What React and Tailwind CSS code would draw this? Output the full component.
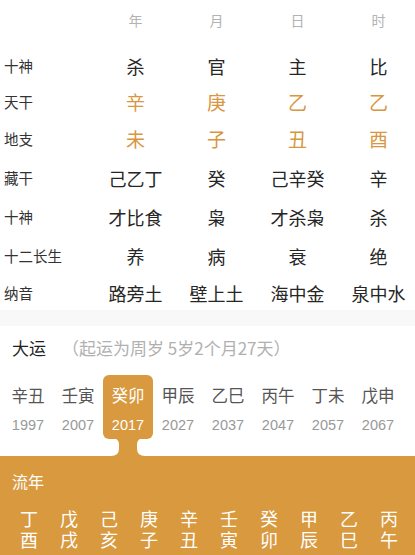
import React from 'react';

const font = { fontFamily: '"Noto Sans CJK SC", "Noto Sans", sans-serif' };
const numFont = { fontFamily: '"Liberation Sans", Arial, sans-serif' };

const rows = [
  { label: '十神', h: 'h-[36px]', vals: ['杀', '官', '主', '比'], orange: false },
  { label: '天干', h: 'h-[36px]', vals: ['辛', '庚', '乙', '乙'], orange: true },
  { label: '地支', h: 'h-[38px]', vals: ['未', '子', '丑', '酉'], orange: true },
  { label: '藏干', h: 'h-[40px]', vals: ['己乙丁', '癸', '己辛癸', '辛'], orange: false },
  { label: '十神', h: 'h-[38px]', vals: ['才比食', '枭', '才杀枭', '杀'], orange: false },
  { label: '十二长生', h: 'h-[40px]', vals: ['养', '病', '衰', '绝'], orange: false },
  { label: '纳音', h: 'h-[34px]', vals: ['路旁土', '壁上土', '海中金', '泉中水'], orange: false },
];

const dayun = [
  ['辛丑', '1997'],
  ['壬寅', '2007'],
  ['癸卯', '2017'],
  ['甲辰', '2027'],
  ['乙巳', '2037'],
  ['丙午', '2047'],
  ['丁未', '2057'],
  ['戊申', '2067'],
];

const liunian = ['丁酉', '戊戌', '己亥', '庚子', '辛丑', '壬寅', '癸卯', '甲辰', '乙巳', '丙午'];

const App = () => {
  return (
    <div className="w-[415px] h-[555px] overflow-hidden bg-white flex flex-col" style={font}>
      {/* pillars table */}
      <div className="grid grid-cols-[95px_81px_81px_81px_81px] h-[40px] items-center text-[14px] text-[#b3b3b3]">
        <div />
        <div className="text-center">年</div>
        <div className="text-center">月</div>
        <div className="text-center">日</div>
        <div className="text-center">时</div>
      </div>
      <div className="mt-[8px] flex flex-col">
        {rows.map((r, i) => (
          <div key={i} className={`grid grid-cols-[95px_81px_81px_81px_81px] items-center ${r.h}`}>
            <div className="pl-[4px] text-[14.5px] text-[#333]">{r.label}</div>
            {r.vals.map((v, j) => (
              <div
                key={j}
                className={r.orange ? 'text-center text-[19px] text-[#d8963f]' : 'text-center text-[18px] text-[#262626]'}
              >
                {v}
              </div>
            ))}
          </div>
        ))}
      </div>
      <div className="h-[16px] bg-[#f8f8f8]" />

      {/* dayun */}
      <div className="flex items-center h-[44px] pl-[12px] text-[17px]">
        <span className="text-[#1f1f1f]">大运</span>
        <span className="ml-[16px] text-[#b0b0b0]">（起运为周岁 5岁2个月27天）</span>
      </div>
      <div className="ml-[3px] mt-[5px] grid grid-cols-[repeat(8,50px)]">
        {dayun.map(([gz, yr], i) => {
          const sel = i === 2;
          return (
            <div key={i} className="flex flex-col items-center">
              <div
                className={
                  sel
                    ? 'w-full h-[64px] flex flex-col items-center rounded-[6px] bg-[#d8993f] text-white'
                    : 'w-full h-[64px] flex flex-col items-center text-[#555]'
                }
              >
                <div className="mt-[7px] h-[26px] leading-[26px] text-[16.5px]">{gz}</div>
                <div
                  className={sel ? 'mt-[7px] text-[14.5px] text-white' : 'mt-[7px] text-[14.5px] text-[#999]'}
                  style={numFont}
                >
                  {yr}
                </div>
              </div>
              {sel ? (
                <svg width="50" height="18" viewBox="0 0 50 18" className="block -mt-[1px]">
                  <path
                    d="M8 0 H42 Q34 0 34 6 V11 Q34 18 42 18 H8 Q16 18 16 11 V6 Q16 0 8 0 Z"
                    fill="#d8993f"
                  />
                </svg>
              ) : (
                <div className="h-[17px]" />
              )}
            </div>
          );
        })}
      </div>

      {/* liunian */}
      <div className="flex-1 bg-[#d8993f] text-white">
        <div className="pl-[12px] pt-[14px] text-[16px] leading-[22px]">流年</div>
        <div className="ml-[9px] mt-[16px] grid grid-cols-[repeat(10,40px)]">
          {liunian.map((s, i) => (
            <div key={i} className="flex justify-center">
              <div className="w-[18px] text-[18px] leading-[21px] text-center break-all">{s}</div>
            </div>
          ))}
        </div>
      </div>
    </div>
  );
};

export default App;
